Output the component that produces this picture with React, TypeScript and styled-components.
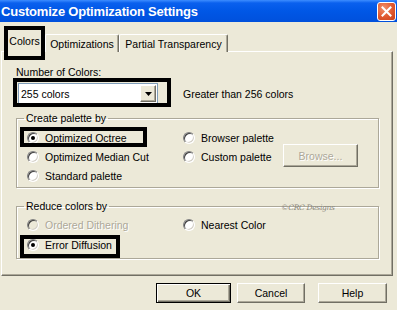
import React from 'react';
import styled, { createGlobalStyle } from 'styled-components';

const GlobalStyle = createGlobalStyle`
  html, body {
    margin: 0;
    padding: 0;
    background: #ece9d8;
  }
  body {
    font-family: 'Liberation Sans', Arial, sans-serif;
    font-size: 10.5px;
    color: #000;
  }
`;

const Window = styled.div`
  width: 397px;
  height: 310px;
  display: flex;
  flex-direction: column;
  background: #ece9d8;
  overflow: hidden;
`;

const TitleBar = styled.div`
  height: 22px;
  flex: none;
  display: flex;
  align-items: center;
  justify-content: space-between;
  padding: 0 1px 0 1px;
  background: linear-gradient(#3d8dff 0, #0a60ee 3px, #0057e6 50%, #0050dc 100%);
`;

const Title = styled.span`
  color: #fff;
  font-family: 'Liberation Sans', Arial, sans-serif;
  font-weight: bold;
  font-size: 13px;
  letter-spacing: -0.2px;
`;

const CloseButton = styled.div`
  width: 19px;
  height: 19px;
  box-sizing: border-box;
  border: 1px solid #fff;
  border-radius: 3px;
  background: radial-gradient(circle at 35% 30%, #f0906c 0, #e0582f 55%, #c8401c 100%);
  display: flex;
  align-items: center;
  justify-content: center;
`;

const Body = styled.div`
  flex: 1;
  display: flex;
  flex-direction: column;
  padding: 0 4px 0 1px;
`;

const TabStrip = styled.div`
  height: 29px;
  display: flex;
  align-items: flex-end;
  padding-left: 3px;
  position: relative;
  z-index: 2;
`;

const Tab = styled.div<{ $selected?: boolean; $width: number }>`
  position: relative;
  box-sizing: border-box;
  width: ${p => p.$width}px;
  height: ${p => (p.$selected ? 23 : 18)}px;
  margin-bottom: -1px;
  background: #ece9d8;
  border-top: 1px solid #fff;
  border-left: 1px solid #fff;
  border-right: 1px solid #716f64;
  border-radius: 2px 2px 0 0;
  box-shadow: inset -1px 0 0 #aca899;
  display: flex;
  justify-content: center;
  align-items: center;
  padding-top: ${p => (p.$selected ? 0 : 1)}px;
`;

const Panel = styled.div`
  height: 225px;
  box-sizing: border-box;
  border-top: 1px solid #fff;
  border-left: 1px solid #fff;
  border-right: 1px solid #716f64;
  border-bottom: 1px solid #716f64;
  box-shadow: inset -1px -1px 0 #aca899;
  display: flex;
  flex-direction: column;
  align-items: flex-start;
  padding-left: 14px;
`;

const FieldLabel = styled.div`
  line-height: 13px;
  margin-top: 14px;
`;

const SelectRow = styled.div`
  margin-top: 4px;
  display: flex;
  align-items: center;
`;

const Select = styled.div`
  position: relative;
  margin-left: 2px;
  width: 140px;
  height: 21px;
  box-sizing: border-box;
  border: 1px solid #7f9db9;
  background: #fff;
  display: flex;
  align-items: center;
  justify-content: space-between;
  padding: 1px 1px 1px 2px;
`;

const ArrowButton = styled.div`
  width: 16px;
  height: 17px;
  box-sizing: border-box;
  background: #ece9d8;
  border: 1px solid;
  border-color: #fff #716f64 #716f64 #fff;
  box-shadow: inset -1px -1px 0 #aca899;
  display: flex;
  align-items: center;
  justify-content: center;
`;

const Hint = styled.span`
  margin-left: 25px;
`;

const Group = styled.fieldset<{ $gap: number }>`
  position: relative;
  margin: ${p => p.$gap}px 0 0 0;
  width: 363px;
  box-sizing: border-box;
  padding: 0;
  border: 1px solid #aca899;
  box-shadow: inset 1px 1px 0 #fff, 1px 1px 0 #fff;
  min-width: 0;
`;

const Legend = styled.legend`
  margin-left: 7px;
  padding: 0 2px;
  line-height: 13px;
`;

const OptionGrid = styled.div<{ $row: number; $pad: string }>`
  display: grid;
  grid-template-columns: 156px 100px 75px;
  grid-auto-rows: ${p => p.$row}px;
  align-items: center;
  padding: ${p => p.$pad};
`;

const Option = styled.label<{ $disabled?: boolean }>`
  position: relative;
  display: flex;
  align-items: center;
  gap: 6px;
  white-space: nowrap;
  color: ${p => (p.$disabled ? '#aca899' : '#000')};
  text-shadow: ${p => (p.$disabled ? '1px 1px 0 #fff' : 'none')};
`;

const Radio = styled.span<{ $checked?: boolean; $disabled?: boolean }>`
  flex: none;
  width: 12px;
  height: 12px;
  box-sizing: border-box;
  border-radius: 50%;
  border: 1px solid;
  border-color: #808080 #fff #fff #808080;
  box-shadow: inset 1px 1px 0 #404040, inset -1px -1px 0 #d4d0c8;
  background: ${p => (p.$disabled ? '#ece9d8' : '#fff')};
  display: flex;
  align-items: center;
  justify-content: center;

  &::after {
    content: '';
    display: ${p => (p.$checked ? 'block' : 'none')};
    width: 4px;
    height: 4px;
    border-radius: 50%;
    background: #000;
  }
`;

const Spacer = styled.span``;

const Button = styled.div<{ $width: number; $default?: boolean; $disabled?: boolean; $gap?: number }>`
  width: ${p => p.$width}px;
  height: ${p => (p.$disabled ? 23 : 20)}px;
  margin-left: ${p => p.$gap ?? 0}px;
  box-sizing: border-box;
  display: flex;
  align-items: center;
  justify-content: center;
  background: #ece9d8;
  border: 1px solid;
  border-color: ${p => (p.$default ? '#000' : '#fff #716f64 #716f64 #fff')};
  box-shadow: ${p =>
    p.$default
      ? 'inset 1px 1px 0 #fff, inset -1px -1px 0 #716f64, inset -2px -2px 0 #aca899'
      : 'inset -1px -1px 0 #aca899'};
  color: ${p => (p.$disabled ? '#aca899' : '#000')};
  text-shadow: ${p => (p.$disabled ? '1px 1px 0 #fff' : 'none')};
`;

const BrowseButton = styled(Button)`
  margin-top: -2px;
`;

const ButtonRow = styled.div`
  display: flex;
  justify-content: flex-end;
  margin-top: 7px;
  padding-right: 6px;
`;

const Highlight = styled.span<{ $top: number; $left: number; $width: number; $height: number }>`
  position: absolute;
  top: ${p => p.$top}px;
  left: ${p => p.$left}px;
  width: ${p => p.$width}px;
  height: ${p => p.$height}px;
  box-sizing: border-box;
  border: 4px solid #000;
  z-index: 5;
  pointer-events: none;
`;

const Watermark = styled.span`
  position: absolute;
  top: -10px;
  left: 264px;
  font-family: 'DejaVu Serif', serif;
  font-style: italic;
  font-size: 7.5px;
  color: #8a877c;
  letter-spacing: -0.3px;
`;

export default function App() {
  return (
    <Window>
      <GlobalStyle />
      <TitleBar>
        <Title>Customize Optimization Settings</Title>
        <CloseButton>
          <svg width="11" height="11" viewBox="0 0 11 11">
            <path d="M1.5 1.5 L9.5 9.5 M9.5 1.5 L1.5 9.5" stroke="#fff" strokeWidth="2" strokeLinecap="square" />
          </svg>
        </CloseButton>
      </TitleBar>
      <Body>
        <TabStrip>
          <Tab $selected $width={41}>
            Colors
            <Highlight $top={-4} $left={-1} $width={41} $height={34} />
          </Tab>
          <Tab $width={74}>Optimizations</Tab>
          <Tab $width={109}>Partial Transparency</Tab>
        </TabStrip>
        <Panel>
          <FieldLabel>Number of Colors:</FieldLabel>
          <SelectRow>
            <Select>
              <span>255 colors</span>
              <ArrowButton>
                <svg width="7" height="4" viewBox="0 0 7 4">
                  <path d="M0 0 H7 L3.5 4 Z" fill="#000" />
                </svg>
              </ArrowButton>
              <Highlight $top={-6} $left={-6} $width={158} $height={29} />
            </Select>
            <Hint>Greater than 256 colors</Hint>
          </SelectRow>

          <Group $gap={8}>
            <Legend>Create palette by</Legend>
            <OptionGrid $row={19} $pad="3px 0 2px 10px">
              <Option>
                <Radio $checked />
                Optimized Octree
                <Highlight $top={-5} $left={-7} $width={127} $height={20} />
              </Option>
              <Option>
                <Radio />
                Browser palette
              </Option>
              <Spacer />
              <Option>
                <Radio />
                Optimized Median Cut
              </Option>
              <Option>
                <Radio />
                Custom palette
              </Option>
              <BrowseButton $width={75} $disabled>Browse...</BrowseButton>
              <Option>
                <Radio />
                Standard palette
              </Option>
            </OptionGrid>
          </Group>

          <Group $gap={12}>
            <Legend>Reduce colors by</Legend>
            <Watermark>©CRC Designs</Watermark>
            <OptionGrid $row={20} $pad="2px 0 3px 10px">
              <Option $disabled>
                <Radio $disabled />
                Ordered Dithering
              </Option>
              <Option>
                <Radio />
                Nearest Color
              </Option>
              <Spacer />
              <Option>
                <Radio $checked />
                Error Diffusion
                <Highlight $top={-4} $left={-7} $width={100} $height={23} />
              </Option>
            </OptionGrid>
          </Group>
        </Panel>
        <ButtonRow>
          <Button $width={75} $default>OK</Button>
          <Button $width={68} $gap={6}>Cancel</Button>
          <Button $width={69} $gap={13}>Help</Button>
        </ButtonRow>
      </Body>
    </Window>
  );
}
